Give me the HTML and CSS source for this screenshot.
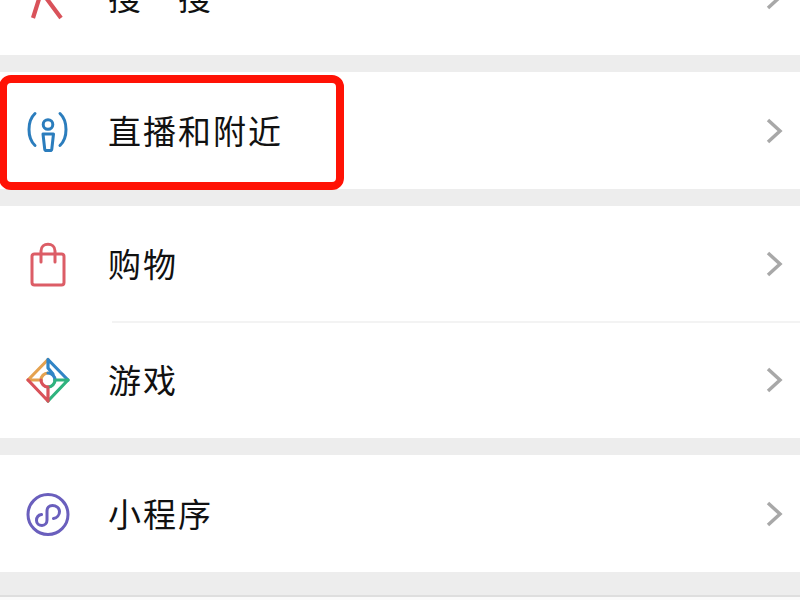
FILE: index.html
```html
<!DOCTYPE html>
<html lang="zh-CN">
<head>
<meta charset="utf-8">
<title>发现</title>
<link rel="stylesheet" href="styles.css">
</head>
<body>
<main class="list">
  <section class="group">
    <div class="row">
      <svg class="icon" viewBox="0 0 48 48"><path class="s-red" d="M17.500 18 L9 45 M17 18 L37 45"/></svg>
      <span class="label">搜一搜</span>
      <svg class="chev" viewBox="0 0 18 28"><path d="M2 3 L14 14 L2 25"/></svg>
    </div>
  </section>
  <section class="group">
    <div class="row">
      <svg class="icon" viewBox="0 0 48 48">
        <g class="s-blue">
          <path d="M11 6.500 C3 14 3 31 11 38.500"/>
          <path d="M36 6.500 C44 14 44 31 36 38.500"/>
          <circle cx="24" cy="17.500" r="4.800"/>
          <path d="M19 27 H29.500 L27.800 42 Q27.600 43.500 26.300 43.500 H22.200 Q20.900 43.500 20.700 42 Z"/>
        </g>
      </svg>
      <span class="label">直播和附近</span>
      <svg class="chev" viewBox="0 0 18 28"><path d="M2 3 L14 14 L2 25"/></svg>
    </div>
    <div class="highlight"></div>
  </section>
  <section class="group">
    <div class="row row-compact">
      <svg class="icon" viewBox="0 0 48 48">
        <g class="s-rose">
          <rect x="8" y="14" width="32" height="31" rx="2.500"/>
          <path d="M17 22 V11 C17 2 31 2 31 11 V22"/>
        </g>
      </svg>
      <span class="label">购物</span>
      <svg class="chev" viewBox="0 0 18 28"><path d="M2 3 L14 14 L2 25"/></svg>
    </div>
    <div class="divider"></div>
    <div class="row row-compact">
      <svg class="icon icon-game" viewBox="0 0 48 48">
        <path class="g-orange" d="M24 3.500 L4 24 H17"/>
        <path class="g-blue" d="M24 3.500 V12 L29 18 M24 3.500 L44 24"/>
        <path class="g-green" d="M44 24 H31 M44 24 L24 45"/>
        <path class="g-red" d="M4 24 L24 45 V31"/>
        <path class="g-orange" d="M17 24 A7 7 0 0 1 24 17"/>
        <path class="g-blue" d="M24 17 A7 7 0 0 1 31 24"/>
        <path class="g-green" d="M31 24 A7 7 0 0 1 24 31"/>
        <path class="g-red" d="M24 31 A7 7 0 0 1 17 24"/>
      </svg>
      <span class="label">游戏</span>
      <svg class="chev" viewBox="0 0 18 28"><path d="M2 3 L14 14 L2 25"/></svg>
    </div>
  </section>
  <section class="group">
    <div class="row">
      <svg class="icon" viewBox="0 0 48 48">
        <g class="s-purple">
          <circle cx="24" cy="24.500" r="20"/>
          <path d="M17.500 24.500 C14.500 25 12.500 27.500 12.500 30.500 C12.500 33.500 15 35.500 18 35.500 C21 35.500 23 33 23 30 V21 C23 18 25 15.500 28.500 15.500 C32 15.500 35.500 18 35.500 21.500 C35.500 25 33 28 29.500 28.500"/>
        </g>
      </svg>
      <span class="label">小程序</span>
      <svg class="chev" viewBox="0 0 18 28"><path d="M2 3 L14 14 L2 25"/></svg>
    </div>
  </section>
  <section class="group group-last"></section>
</main>
</body>
</html>
```

FILE: styles.css
```css
* { box-sizing: border-box; }
html, body { margin: 0; height: 100%; overflow: hidden; background: #ededed; }
.list {
  display: flex;
  flex-direction: column;
  gap: 17px;
  margin-top: -62px;
  font-family: "Noto Sans CJK SC", "Noto Sans", sans-serif;
  color: #111;
}
.group { position: relative; background: #fff; flex: none; display: flex; flex-direction: column; }
.group-last { height: 30px; margin-top: 6px; background: #fafafa; border-top: 2px solid #dedede; }
.row {
  height: 117px;
  display: flex;
  align-items: center;
  padding: 0 16px 0 24px;
}
.row-compact { height: 116px; }
.icon { width: 48px; height: 48px; flex: none; overflow: visible; fill: none; stroke-width: 2.800; stroke-linecap: round; stroke-linejoin: round; }
.icon-game { stroke-width: 3.200; }
.label { margin: 0 0 1px 36px; font-size: 33px; letter-spacing: 2px; font-weight: 400; line-height: 1; flex: 1; }
.chev { width: 18px; height: 28px; flex: none; fill: none; stroke: #a8a8a8; stroke-width: 3.500; }
.divider { height: 2px; background: #f3f3f3; margin: -1px 0 -1px 112px; }
.highlight {
  position: absolute;
  left: -1px;
  top: 3px;
  width: 345px;
  height: 115px;
  border: 8px solid #ff1205;
  border-radius: 12px;
}
.s-red { stroke: #d9525a; stroke-width: 4.200; stroke-linecap: butt; }
.s-blue { stroke: #2b7dbd; stroke-width: 3; }
.s-rose { stroke: #dc5d66; stroke-width: 3; }
.s-purple { stroke: #6a5fbd; stroke-width: 3; }
.g-orange { stroke: #e5a24f; }
.g-blue { stroke: #3185c6; }
.g-green { stroke: #2fb37e; }
.g-red { stroke: #d9525a; }
```
